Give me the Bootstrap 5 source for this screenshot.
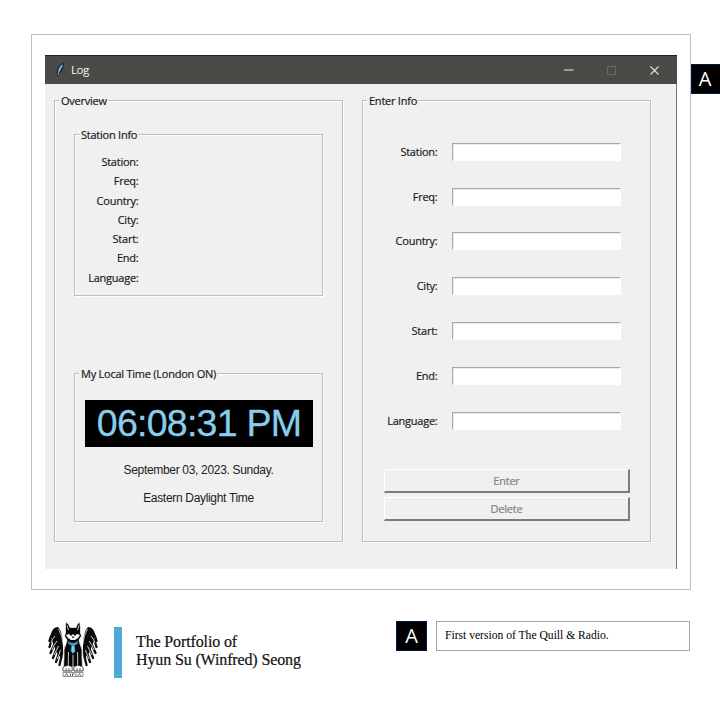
<!DOCTYPE html>
<html lang="en">
<head>
<meta charset="utf-8">
<meta name="viewport" content="width=device-width, initial-scale=1">
<title>The Quill &amp; Radio</title>
<link href="https://cdn.jsdelivr.net/npm/bootstrap@5.3.0/dist/css/bootstrap.min.css" rel="stylesheet">
<style>
body{width:720px;height:717px;overflow:hidden;background:#fff;color:#1c1c1c;font-family:"Open Sans","Noto Sans",sans-serif;font-size:11px;line-height:16px}
.stage{padding-top:34px;padding-left:31px}
.sheet{width:660px;height:556px;border:1px solid #bfbfbf;padding:20px 13px}
.win{width:632px;height:514px;background:#f0f0f0;border-right:1px solid #777}
.titlebar{height:29px;margin-right:-1px;background:#4c4a47;border-top:1px solid #222;color:#f4f4f4;padding-left:10px}
.wintitle{font-size:11.5px;letter-spacing:-.4px;margin-left:6px}
.panes{padding:16px 0 0 9px;gap:19px}
.group{border:1px solid #bcbcbc;box-shadow:1px 1px 0 #fff,inset 1px 1px 0 #fff}
.caption-tag,.facts,.field label{letter-spacing:-.24px;-webkit-text-stroke:.2px #1c1c1c;white-space:nowrap}
.caption-tag{display:table;background:#f0f0f0;margin:-8px 0 0 4px;padding:0 1px 0 2px;height:16px}
.overview,.entry{width:289px;height:442px}
.station{width:249px;height:162px;margin:25px 0 0 19px}
.local{width:249px;height:149px;margin:77px 0 0 19px}
.facts{width:63.500px;margin-top:9px}
.facts div{height:19.25px;line-height:19.25px}
.clock{width:228px;height:47px;margin:18px 0 0 10px;background:#000;color:#87ceeb;font:37.5px/46px "Liberation Sans",Arial,sans-serif;letter-spacing:-.75px;-webkit-text-stroke:.3px #87ceeb;white-space:nowrap}
.plain{font-family:"Liberation Sans",Arial,sans-serif;font-size:12px;letter-spacing:-.32px}
.day{margin-top:15px}
.zone{margin-top:12px}
.fields{margin-top:20.500px}
.field{height:44.8px}
.field label{width:74.500px}
.field input{width:169px;height:18px;margin-left:14.500px;border:1px solid #fff;border-top:1px solid #a8a8a8;border-left-color:#a8a8a8;background:#fff;box-shadow:inset 1px 1px 0 #ececec}
.actions{padding-top:25.500px}
.bevel{width:246px;height:24px;margin:0 0 4px 21px;border-radius:0;padding:0;font-size:11px;line-height:21px;letter-spacing:-.24px;-webkit-text-stroke:.2px #838383;color:#838383;background:#f0f0f0;border:1px solid #fff;border-right:2px solid #7c7c7c;border-bottom:2px solid #7c7c7c}
.marker{background:#000;color:#fff;border:1px solid #001b50;font:20px/28px "Open Sans",sans-serif}
.side{width:29px;height:30px;margin-top:30px;border-right:0;padding-right:2px}
.foot{padding:31px 0 0 48px}
.bar{width:8px;height:51px;background:#4fa8d8;margin:6px 0 0 16px}
.name{font:16px/18px "Liberation Serif",serif;letter-spacing:-.13px;-webkit-text-stroke:.2px #111;margin:12px 0 0 14px;width:168px;white-space:nowrap;color:#111}
.keyed{width:31px;height:30px;margin-left:92px}
.desc{width:254px;height:30px;margin-left:9px;border:1px solid #a6a6a6;padding-left:8px;font:11.6px/27px "Liberation Serif",serif;color:#000;white-space:nowrap}
</style>
<script src="https://cdn.jsdelivr.net/npm/bootstrap@5.3.0/dist/js/bootstrap.bundle.min.js"></script>
</head>
<body>
<main class="stage d-flex align-items-start">
  <section class="sheet flex-shrink-0">
    <div class="win">
      <header class="titlebar d-flex align-items-center">
        <svg width="10" height="16" viewBox="0 0 10 16"><path d="M9 1C5 2 1 6 2 12L3 15L4 12C8 9 9 5 9 1Z" fill="#182331"/><path d="M8 2Q3 5 3 11Q7 8 8 2" fill="#5791cf"/><path d="M7 3Q4 7 3 13" stroke="#b6d7f5" stroke-width=".7" fill="none"/></svg>
        <span class="wintitle">Log</span>
        <svg class="ms-auto" width="114" height="28" viewBox="0 0 114 28" fill="none"><path d="M1 14h9.500" stroke="#c4c4c2" stroke-width="1.300"/><path d="M44.500 10.500h8v8h-8z" stroke="#6c6a67"/><path d="M87.500 10.500l8 8m0-8l-8 8" stroke="#dededc" stroke-width="1.100"/></svg>
      </header>
      <div class="panes d-flex">
        <div class="group overview">
          <div class="caption-tag">Overview</div>
          <div class="group station">
            <div class="caption-tag">Station Info</div>
            <div class="facts text-end"><div>Station:</div><div>Freq:</div><div>Country:</div><div>City:</div><div>Start:</div><div>End:</div><div>Language:</div></div>
          </div>
          <div class="group local">
            <div class="caption-tag">My Local Time (London ON)</div>
            <div class="clock text-center">06:08:31 PM</div>
            <div class="plain day text-center">September 03, 2023. Sunday.</div>
            <div class="plain zone text-center">Eastern Daylight Time</div>
          </div>
        </div>
        <div class="group entry">
          <div class="caption-tag">Enter Info</div>
          <form class="fields">
            <div class="field d-flex align-items-center"><label class="text-end" for="f1">Station:</label><input id="f1"></div>
            <div class="field d-flex align-items-center"><label class="text-end" for="f2">Freq:</label><input id="f2"></div>
            <div class="field d-flex align-items-center"><label class="text-end" for="f3">Country:</label><input id="f3"></div>
            <div class="field d-flex align-items-center"><label class="text-end" for="f4">City:</label><input id="f4"></div>
            <div class="field d-flex align-items-center"><label class="text-end" for="f5">Start:</label><input id="f5"></div>
            <div class="field d-flex align-items-center"><label class="text-end" for="f6">End:</label><input id="f6"></div>
            <div class="field d-flex align-items-center"><label class="text-end" for="f7">Language:</label><input id="f7"></div>
          </form>
          <div class="actions d-flex flex-column">
            <button class="btn bevel">Enter</button>
            <button class="btn bevel">Delete</button>
          </div>
        </div>
      </div>
    </div>
  </section>
  <div class="marker side text-center flex-shrink-0">A</div>
</main>
<footer class="foot d-flex align-items-start">
  <svg width="50" height="57" viewBox="0 0 50 57">
    <!-- feathered wing, mirrored for the right side -->
    <g id="wing">
      <path d="M15 27C15 19 14 10 10 6C6 6 4 9 3 13L5 22L9 32L14 38Z" fill="#0b0b0b"/>
      <path d="M8 9Q3 13 1.500 20M8 14Q3 19 1.500 26M9 18Q5 26 2.500 32M10 22Q8 30 5 37M12 25Q11 34 8 41M14 28Q14 36 11.500 44" fill="none" stroke="#0b0b0b" stroke-width="2.300" stroke-linecap="round"/>
      <path d="M7 15Q4 18 3 22M9 20Q5 25 4 29M10.500 25Q8 30 6 34M12.500 29Q11 34 9 38" fill="none" stroke="#fff" stroke-width=".8"/>
      <path d="M10.500 8Q14 14 15.500 24" fill="none" stroke="#fff" stroke-width=".7"/>
    </g>
    <use href="#wing" transform="matrix(-1 0 0 1 50 0)"/>
    <!-- seated dog -->
    <path d="M18 .8Q21 3 22 6.500H28Q29 3 31.500 .8Q33 6 32.500 12L33.500 15L31 19L32 23Q35 28 34 36L34.500 46H15.500L16 36Q15 28 18 23L19 19L16.500 15L17.500 12Q17 6 18 .8Z" fill="#070707" stroke="#fff" stroke-width=".7"/>
    <path d="M19 4.500L20.500 9M31 4.500L29.500 9" stroke="#fff" stroke-width=".8"/>
    <path d="M18 14L21 13L23 15L25 13L27 15L29 13L32 14L30 17L27 19H23L20 17Z" fill="#fff"/>
    <path d="M23.500 15.500h3L25 17.500z" fill="#111"/>
    <path d="M20 20Q25 24 30 20L29.500 23L26.500 24.500L27.500 30L25 33L22.500 30L23.500 24.500L20.500 23Z" fill="#3c9fd2"/>
    <path d="M25 25v6" stroke="#c1e8fb" stroke-width="1.200"/>
    <path d="M25 34v13M20.500 31Q20 38 20.500 45M29.500 31Q30 38 29.500 45" stroke="#fff" stroke-width=".8" fill="none"/>
    <path d="M15 50Q14 45 18 45Q20 43 22 45Q25 45 24 50ZM26 50Q25 45 28 45Q30 43 32 45Q36 45 35 50Z" fill="#fff" stroke="#222" stroke-width=".8"/>
    <path d="M18 47v3M21 47v3M29 47v3M32 47v3" stroke="#222" stroke-width=".7"/>
    <path d="M15 51.500H35V55.500H15Z" fill="#fff" stroke="#777" stroke-width=".8"/>
    <path d="M17 55l1.500-2.500L20 55M22.500 52.500v2.500M24.500 52.500v2.500M24.500 53h2M28 52.500v2.500M30 55l1.500-2.500L33 55" fill="none" stroke="#444" stroke-width=".8"/>
  </svg>
  <div class="bar"></div>
  <div class="name">The Portfolio of<br>Hyun Su (Winfred) Seong</div>
  <div class="marker keyed text-center">A</div>
  <div class="desc">First version of The Quill &amp; Radio.</div>
</footer>
</body>
</html>
